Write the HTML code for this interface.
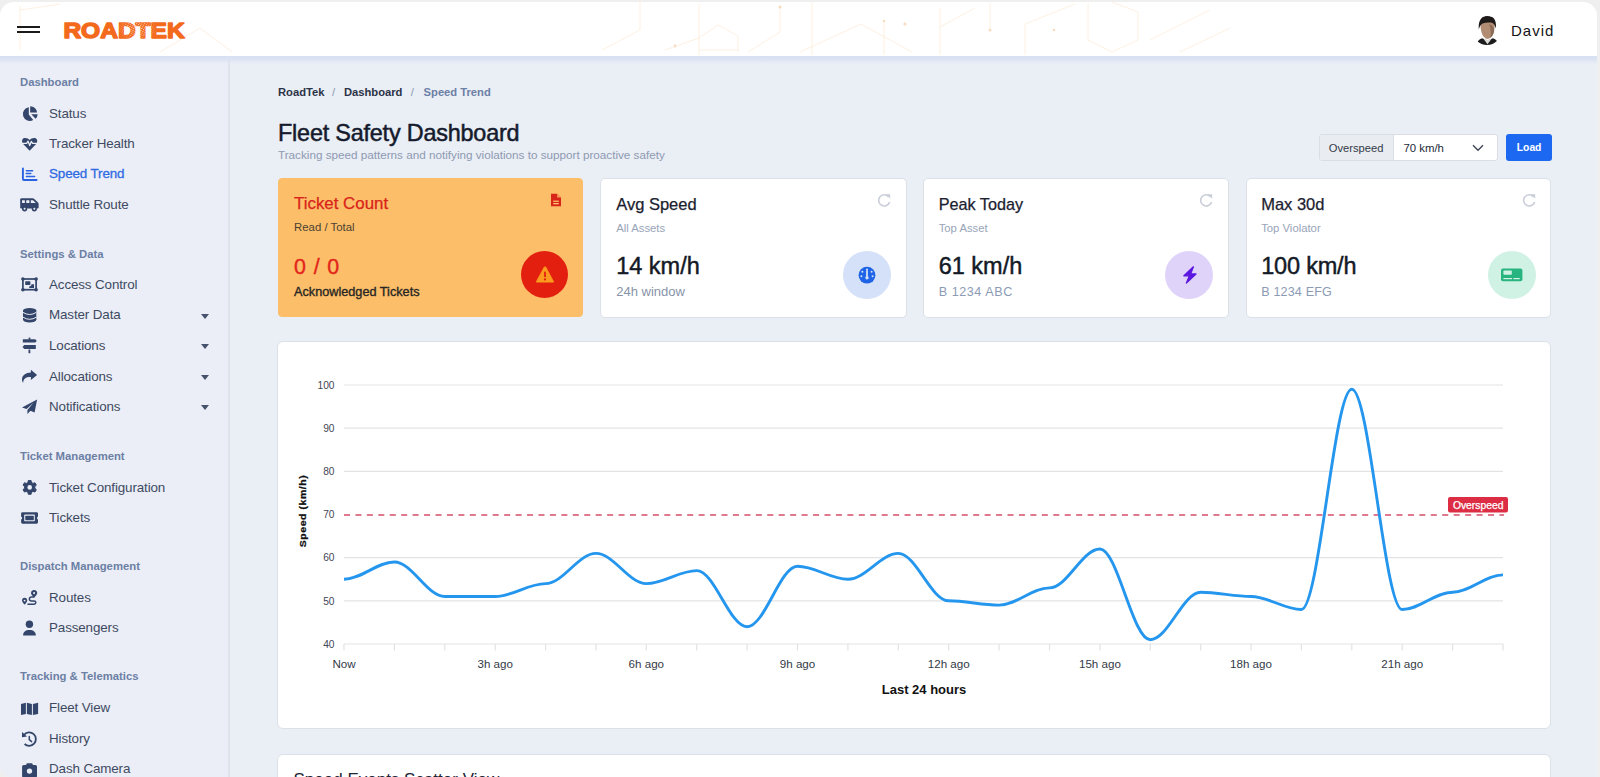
<!DOCTYPE html>
<html><head><meta charset="utf-8">
<style>
*{box-sizing:border-box;margin:0;padding:0}
html,body{width:1600px;height:777px;overflow:hidden;background:#efefef;font-family:"Liberation Sans",sans-serif;position:relative}
.abs{position:absolute;white-space:nowrap}
#bg{position:absolute;left:0;top:2px;width:1597px;height:775px;background:#eaeef5;border-radius:14px 14px 0 12px}
#side{position:absolute;left:0;top:55px;width:230px;height:722px;background:#ebeef6;border-right:2px solid #dde2eb;border-radius:0 0 0 12px}
#shadow{position:absolute;left:0;top:55px;width:1597px;height:9px;background:linear-gradient(#d5dff2,#dbe3f3 45%,rgba(234,238,246,0))}
#hdr{position:absolute;left:0;top:2px;width:1597px;height:53.5px;background:#fff;border-radius:14px 14px 0 0}
.sh{position:absolute;left:20px;font-size:11.3px;font-weight:bold;color:#6c7fa5;line-height:14px;white-space:nowrap}
.it{position:absolute;left:49px;font-size:13.4px;letter-spacing:-0.12px;color:#3e4a62;line-height:16px;white-space:nowrap}
.it.act{color:#2e6be3;-webkit-text-stroke:0.3px #2e6be3}
.car{position:absolute;left:201.2px;width:0;height:0;border-left:4.6px solid transparent;border-right:4.6px solid transparent;border-top:5.2px solid #46526b}
.card{position:absolute;top:177.8px;height:139.8px;background:#fff;border:1px solid #dce1e9;border-radius:5px}
.t{position:absolute;white-space:nowrap;line-height:1}
</style></head><body>
<div id="bg"></div>
<div id="side"></div>
<div id="shadow"></div>
<div id="hdr"></div>
<svg class="abs" style="left:0;top:2px" width="1597" height="53" viewBox="0 2 1597 53"><g fill="none" stroke="#fcecdb" stroke-width="0.8">
<path d="M699 4 V55 M665 50 L699 38 L718 25 L738 36 V52 M738 50 L699 50"/>
<path d="M780 5 V32 L748 52 M812 2 V55 M800 52 L861 24 L912 52"/>
<path d="M884 20 V55 M940 8 V55 M940 27 L975 8 M990 3 V30"/>
<path d="M1025 55 V24 L1075 4 M1088 4 V40 L1112 52 L1138 40 V12 L1112 2"/>
<path d="M1150 40 L1210 10 M1180 52 L1230 28 M602 50 L640 30 V2"/>
<path d="M20 6 V50 M20 10 L60 4 M160 52 L200 28 L232 52"/>
</g><g fill="#f7dcc0"><circle cx="780" cy="7" r="1.5"/><circle cx="990" cy="30" r="1.5"/><circle cx="905" cy="24" r="1.6"/><circle cx="675" cy="46" r="1.4"/><circle cx="884" cy="21" r="1.3"/><circle cx="1054" cy="30" r="1.3"/></g></svg>

<!-- header -->
<div class="abs" style="left:17px;top:25.8px;width:23px;height:2px;background:#1b1b1b"></div>
<div class="abs" style="left:17px;top:31px;width:23px;height:2.2px;background:#1b1b1b"></div>
<svg class="abs" style="left:0;top:0" width="230" height="55"><text x="63.4" y="38.2" font-size="22.6" font-weight="bold" fill="#f36a1c" stroke="#f36a1c" stroke-width="1.5" stroke-linejoin="round" textLength="121.3" lengthAdjust="spacingAndGlyphs">ROADTEK</text><defs><pattern id="spk" width="2.3" height="1.9" patternUnits="userSpaceOnUse" patternTransform="rotate(28)"><rect width="1.2" height="0.9" fill="#fff"/></pattern><radialGradient id="mg"><stop offset="0" stop-color="#fff" stop-opacity="0.9"/><stop offset="0.6" stop-color="#fff" stop-opacity="0.55"/><stop offset="1" stop-color="#fff" stop-opacity="0"/></radialGradient><mask id="mk"><ellipse cx="137" cy="29" rx="21" ry="13" fill="url(#mg)"/></mask></defs><rect x="92" y="16" width="66" height="28" fill="url(#spk)" mask="url(#mk)"/></svg>
<svg class="abs" style="left:1465px;top:10px" width="45" height="42" viewBox="1465 10 45 42">
 <defs><clipPath id="av"><circle cx="1487" cy="30.5" r="14.5"/></clipPath></defs>
 <g clip-path="url(#av)">
  <path d="M1476 46 Q1477 40 1482 38.2 L1487.5 40.5 L1493 38.2 Q1498 40 1499 46 Z" fill="#1c1c1e"/>
  <path d="M1483.2 38.4 L1487.5 44.2 L1491.8 38.4 L1487.5 40 Z" fill="#dcd9d6"/>
  <path d="M1480.4 21 Q1480 37.6 1487.6 39 Q1494.9 37.6 1494.9 21 Z" fill="#b38d73"/>
  <path d="M1489 24 Q1494.8 26 1494.2 31 Q1493.4 36 1490 38 Q1492 32 1489 24 Z" fill="#8d6c58"/>
  <path d="M1478.8 29.5 C1478 19 1482.6 15.8 1487.5 15.8 C1493 15.8 1497 19.5 1495.8 28.6 C1495 25 1494 23.2 1491 22.6 C1488 22.2 1485 22.6 1482.6 23.4 C1480.6 24.4 1479.6 26.6 1478.8 29.5 Z" fill="#1d1a19"/>
 </g>
</svg>
<div class="t" style="left:1511px;top:22.5px;font-size:15px;letter-spacing:1px;color:#141414">David</div>

<!-- sidebar -->
<div class="sh" style="top:74.9px">Dashboard</div>
<div class="sh" style="top:246.5px">Settings &amp; Data</div>
<div class="sh" style="top:449.1px">Ticket Management</div>
<div class="sh" style="top:559.1px">Dispatch Management</div>
<div class="sh" style="top:669.4px">Tracking &amp; Telematics</div>
<div class="it" style="top:105.86px">Status</div>
<div class="it" style="top:136.16px">Tracker Health</div>
<div class="it act" style="top:166.26px">Speed Trend</div>
<div class="it" style="top:197.06px">Shuttle Route</div>
<div class="it" style="top:277.16px">Access Control</div>
<div class="it" style="top:307.26px">Master Data</div>
<div class="car" style="top:313.5px"></div>
<div class="it" style="top:338.06px">Locations</div>
<div class="car" style="top:344.3px"></div>
<div class="it" style="top:368.66px">Allocations</div>
<div class="car" style="top:374.9px"></div>
<div class="it" style="top:398.76px">Notifications</div>
<div class="car" style="top:405.0px"></div>
<div class="it" style="top:480.16px">Ticket Configuration</div>
<div class="it" style="top:510.26px">Tickets</div>
<div class="it" style="top:589.96px">Routes</div>
<div class="it" style="top:620.36px">Passengers</div>
<div class="it" style="top:700.06px">Fleet View</div>
<div class="it" style="top:730.56px">History</div>
<div class="it" style="top:761.06px">Dash Camera</div>
<svg class="abs" style="left:0;top:0" width="229" height="777">
<g fill="#33456a"><path d="M28.8 107.2 V114.4 L33.2 120 A6.9 6.9 0 1 1 28.8 107.2 Z"/><path d="M30.2 106.2 A6.9 6.9 0 0 1 37.1 112.6 H30.2 Z"/><path d="M31.3 114.2 H37.7 A7 7 0 0 1 35.6 118.8 Z"/></g>
<g fill="#33456a"><path d="M29.65 150.7 L23.4 144.2 C21.4 142 21.6 138.6 24.4 138 C26.4 137.6 28.4 138.5 29.65 140 C30.9 138.5 32.9 137.6 34.9 138 C37.7 138.6 37.9 142 35.9 144.2 Z"/></g>
<polyline points="21.5,143.3 26.6,143.3 28.1,141.2 29.7,145.6 31.3,141.4 32.6,143.3 38,143.3" fill="none" stroke="#ebeef6" stroke-width="1.3" stroke-linejoin="round"/>
<g stroke="#2a62e2" fill="none" stroke-linecap="round"><path d="M22.9 168.4 V179 Q22.9 180 23.9 180 H36.6" stroke-width="1.9"/><path d="M26.4 170.7 H32.6 M26.2 173.4 H30.8 M26.4 176.4 H34.6" stroke-width="1.5"/></g>
<g fill="#33456a"><path d="M20.2 199.6 Q20.2 198.2 21.6 198.2 H32.6 Q33.6 198.2 34.3 198.9 L38 202.6 Q38.6 203.3 38.6 204.3 V207.3 Q38.6 208.5 37.4 208.5 H21.4 Q20.2 208.5 20.2 207.3 Z"/><circle cx="24.6" cy="208.8" r="2.6"/><circle cx="34.3" cy="208.8" r="2.6"/></g>
<g fill="#ebeef6"><rect x="22" y="200.2" width="2.9" height="2.8" rx=".4"/><rect x="26.2" y="200.2" width="3.2" height="2.8" rx=".4"/><path d="M30.8 200.2 H33 L35.9 203 H30.8 Z"/><circle cx="24.6" cy="208.8" r="1.0"/><circle cx="34.3" cy="208.8" r="1.0"/></g>
<g fill="#33456a"><rect x="22.9" y="279" width="13.2" height="10.7" fill="none" stroke="#33456a" stroke-width="1.7"/><circle cx="22.9" cy="279" r="1.8"/><circle cx="36.1" cy="279" r="1.8"/><circle cx="22.9" cy="289.7" r="1.8"/><circle cx="36.1" cy="289.7" r="1.8"/><rect x="25.2" y="281.2" width="5.2" height="3.7" rx=".6"/><path d="M31.6 284.2 H34 V287.9 H29.2 V286.4 Q31.6 286.2 31.6 284.2 Z"/></g>
<g fill="#33456a"><ellipse cx="29.65" cy="310.6" rx="6.65" ry="2.6"/><rect x="23" y="310.6" width="13.3" height="9.3"/><ellipse cx="29.65" cy="319.8" rx="6.65" ry="2.6"/></g><path d="M23 312.4 Q29.65 316.6 36.3 312.4 M23 317.2 Q29.65 321.4 36.3 317.2" fill="none" stroke="#ebeef6" stroke-width="1"/>
<g fill="#33456a"><rect x="28.6" y="337.6" width="1.8" height="2" /><path d="M22.8 339.2 H35.2 L36.8 340.9 L35.2 342.6 H22.8 Z"/><path d="M24.2 344.9 H35.8 V348.9 H24.2 L22.5 346.9 Z"/><rect x="28.5" y="349.6" width="1.8" height="3.6" rx=".5"/></g>
<path d="M37.1 375 L30.9 369.7 V372.6 C25.8 372.8 22 375.2 22 379.6 C22 381 22.6 382.2 23.2 382.8 C23.2 378.8 26 376.8 30.9 377 V380 Z" fill="#33456a"/>
<path d="M37.1 399.4 L22 407.4 L26.6 409 L33.6 402.6 L27.4 410 V414.1 L30.4 410.8 L34.6 412.6 Z" fill="#33456a"/>
<path d="M27.87 482.53 L28.31 480.54 L31.09 480.54 L31.53 482.53 L33.00 483.38 L34.95 482.77 L36.34 485.17 L34.83 486.55 L34.83 488.25 L36.34 489.63 L34.95 492.03 L33.00 491.42 L31.53 492.27 L31.09 494.26 L28.31 494.26 L27.87 492.27 L26.40 491.42 L24.45 492.03 L23.06 489.63 L24.57 488.25 L24.57 486.55 L23.06 485.17 L24.45 482.77 L26.40 483.38 Z" fill="#33456a" stroke="#33456a" stroke-width="1" stroke-linejoin="round"/><circle cx="29.7" cy="487.4" r="2.3" fill="#ebeef6"/>
<path d="M21.1 513.6 Q21.1 512.2 22.5 512.2 H36.6 Q38 512.2 38 513.6 V516.4 Q37 517 37 518 Q37 519 38 519.6 V522.3 Q38 523.7 36.6 523.7 H22.5 Q21.1 523.7 21.1 522.3 V519.6 Q22.1 519 22.1 518 Q22.1 517 21.1 516.4 Z" fill="#33456a"/><rect x="24.2" y="514.6" width="10.6" height="6.7" rx=".8" fill="#ebeef6"/><rect x="25.3" y="515.8" width="8.5" height="4.4" rx=".4" fill="#33456a"/>
<g fill="#33456a"><path d="M34.1 590 C32.2 590 31 591.4 31 593 C31 594.8 34.1 597.6 34.1 597.6 C34.1 597.6 37.2 594.8 37.2 593 C37.2 591.4 36 590 34.1 590 Z"/><path d="M24.6 597.8 C22.9 597.8 22 599.1 22 600.5 C22 602.1 24.6 604.6 24.6 604.6 C24.6 604.6 27.2 602.1 27.2 600.5 C27.2 599.1 26.3 597.8 24.6 597.8 Z"/></g><circle cx="34.1" cy="593.1" r="1.05" fill="#ebeef6"/><circle cx="24.6" cy="600.6" r="0.95" fill="#ebeef6"/><path d="M33.8 597 H31.6 Q29.4 597 29.4 599 Q29.4 601 31.6 601 H34 Q35.8 601 35.8 602.6 Q35.8 604.2 34 604.2 H28" fill="none" stroke="#33456a" stroke-width="1.5" stroke-linecap="round"/>
<g fill="#33456a"><circle cx="29.4" cy="624.2" r="3.7"/><path d="M23.1 635.4 C23.1 632 25.4 630 29.45 630 C33.5 630 35.8 632 35.8 635.4 Z"/></g>
<g fill="#33456a"><path d="M21 704 L25.9 702.7 V714 L21 715.1 Z"/><path d="M26.9 702.7 L31.9 704 V715.1 L26.9 714 Z"/><path d="M32.9 704 L38.1 702.7 V714 L32.9 715.1 Z"/></g>
<path d="M24.2 734.6 A6.7 6.7 0 1 1 24.6 744" fill="none" stroke="#33456a" stroke-width="1.8"/><path d="M22 732 L27 736.6 L22 737.2 Z" fill="#33456a"/><path d="M29.3 736.4 V739.6 L31.6 741.6" fill="none" stroke="#33456a" stroke-width="1.5" stroke-linecap="round"/>
<path d="M22.1 766.6 Q22.1 765 23.7 765 H26 L26.9 763.2 H32.1 L33 765 H35.4 Q37 765 37 766.6 V776 Q37 777.6 35.4 777.6 H23.7 Q22.1 777.6 22.1 776 Z" fill="#33456a"/><circle cx="29.5" cy="771.1" r="2.7" fill="#ebeef6"/>
</svg>

<!-- breadcrumb/title -->
<div class="t" style="left:278px;top:87px;font-size:11.2px;font-weight:bold;color:#2b3346">RoadTek</div>
<div class="t" style="left:332px;top:87px;font-size:11.2px;color:#8c99b0">/</div>
<div class="t" style="left:344px;top:87px;font-size:11.2px;font-weight:bold;color:#2b3346">Dashboard</div>
<div class="t" style="left:410.8px;top:87px;font-size:11.2px;color:#8c99b0">/</div>
<div class="t" style="left:423.6px;top:87px;font-size:11.2px;font-weight:bold;color:#6c7fa5">Speed Trend</div>
<div class="t" style="left:278px;top:122.2px;font-size:23.4px;letter-spacing:-0.2px;color:#151b2d;-webkit-text-stroke:0.5px #151b2d">Fleet Safety Dashboard</div>
<div class="t" style="left:278px;top:148.8px;font-size:11.7px;color:#8e9ab2">Tracking speed patterns and notifying violations to support proactive safety</div>

<!-- overspeed control -->
<div class="abs" style="left:1318.5px;top:134px;width:179px;height:27px;border:1px solid #d8dde6;border-radius:3px;background:#fff;overflow:hidden">
 <div class="abs" style="left:0;top:0;width:74px;height:25px;background:#e9ecf1;border-right:1px solid #d8dde6"></div>
</div>
<div class="t" style="left:1328.7px;top:142.6px;font-size:11.2px;color:#333a48">Overspeed</div>
<div class="t" style="left:1403.4px;top:142.6px;font-size:11.4px;color:#222a38">70 km/h</div>
<svg class="abs" style="left:1470px;top:142px" width="16" height="12"><path d="M3 3.3 L8 8.3 L13 3.3" fill="none" stroke="#3a4152" stroke-width="1.3"/></svg>
<div class="abs" style="left:1506px;top:134px;width:45.5px;height:27.3px;background:#1c68f1;border-radius:3px"></div>
<div class="t" style="left:1516.8px;top:142.8px;font-size:10.3px;font-weight:bold;color:#fff">Load</div>

<!-- cards -->
<div class="card" style="left:278.1px;top:178.1px;height:138.5px;width:305.3px;background:#fdbe69;border-color:#fdbe69;border-radius:4px"></div>
<div class="card" style="left:599.5px;width:307.1px"></div>
<div class="card" style="left:922.8px;width:306.2px"></div>
<div class="card" style="left:1245.8px;width:305.2px"></div>
<!-- card1 -->
<div class="t" style="left:294px;top:196.4px;font-size:16.9px;color:#d8231a;-webkit-text-stroke:0.25px #d8231a">Ticket Count</div>
<div class="t" style="left:294px;top:222.3px;font-size:11.4px;color:#4a3f32">Read / Total</div>
<div class="t" style="left:294px;top:257.2px;font-size:21.4px;letter-spacing:0.9px;color:#e2261b;-webkit-text-stroke:0.4px #e2261b">0 / 0</div>
<div class="t" style="left:294px;top:285.6px;font-size:12.7px;color:#272624;-webkit-text-stroke:0.35px #272624">Acknowledged Tickets</div>
<svg class="abs" style="left:549px;top:192px" width="14" height="16"><path d="M2 1.8 H8.2 L12 5.6 V14.2 H2 Z" fill="#d9241a"/><path d="M8.2 1.8 V5.6 H12" fill="#f7a05a"/><rect x="4.2" y="8.6" width="5.6" height="1.3" fill="#fdbf6a"/><rect x="4.2" y="11" width="5.6" height="1.3" fill="#fdbf6a"/></svg>
<div class="abs" style="left:520.7px;top:250.8px;width:47.4px;height:47.4px;border-radius:50%;background:#e3200f"></div>
<svg class="abs" style="left:533px;top:264px" width="24" height="22"><path d="M12 2.6 Q12.9 2.6 13.4 3.5 L20.8 17.2 Q21.3 18.4 20 18.4 H4 Q2.7 18.4 3.2 17.2 L10.6 3.5 Q11.1 2.6 12 2.6 Z" fill="#fb9a1e"/><rect x="11.1" y="7.6" width="1.8" height="5.6" rx=".8" fill="#e3200f"/><circle cx="12" cy="15.4" r="1.1" fill="#e3200f"/></svg>

<!-- card2 -->
<div class="t" style="left:616.2px;top:196.2px;font-size:16.5px;color:#1b2130;-webkit-text-stroke:0.25px #1b2130">Avg Speed</div>
<div class="t" style="left:616.2px;top:222.8px;font-size:11.3px;color:#98a4b8">All Assets</div>
<div class="t" style="left:616.2px;top:255px;font-size:23.5px;color:#141a26;-webkit-text-stroke:0.45px #141a26">14 km/h</div>
<div class="t" style="left:616.2px;top:285.4px;font-size:13px;color:#8793aa">24h window</div>
<svg class="abs" style="left:876px;top:192px" width="17" height="16"><path d="M12.4 4.6 A5.6 5.6 0 1 0 13.6 10" fill="none" stroke="#c9ced8" stroke-width="1.6"/><path d="M9.6 2.2 H14.2 V6.8 Z" fill="#c9ced8"/></svg>
<div class="abs" style="left:842.7px;top:250.6px;width:48.2px;height:48.2px;border-radius:50%;background:#d4e1f8"></div>
<svg class="abs" style="left:857px;top:265px" width="20" height="20"><circle cx="10" cy="10.2" r="8.4" fill="#1f63e6"/><rect x="9.1" y="5" width="1.8" height="6.8" rx=".9" fill="#d4e1f8"/><circle cx="10" cy="12.8" r="1.7" fill="#d4e1f8"/><circle cx="10" cy="4.4" r="1" fill="#d4e1f8"/><circle cx="5.4" cy="6.8" r="1" fill="#d4e1f8"/><circle cx="14.6" cy="6.8" r="1" fill="#d4e1f8"/><circle cx="4.4" cy="11.2" r="1" fill="#d4e1f8"/><circle cx="15.6" cy="11.2" r="1" fill="#d4e1f8"/></svg>

<!-- card3 -->
<div class="t" style="left:938.7px;top:196.2px;font-size:16.2px;color:#1b2130;-webkit-text-stroke:0.25px #1b2130">Peak Today</div>
<div class="t" style="left:938.7px;top:222.8px;font-size:11.3px;color:#98a4b8">Top Asset</div>
<div class="t" style="left:938.7px;top:255px;font-size:23.5px;color:#141a26;-webkit-text-stroke:0.45px #141a26">61 km/h</div>
<div class="t" style="left:938.7px;top:285.6px;font-size:12.6px;letter-spacing:0.55px;color:#8c9bb5">B 1234 ABC</div>
<svg class="abs" style="left:1198px;top:192px" width="17" height="16"><path d="M12.4 4.6 A5.6 5.6 0 1 0 13.6 10" fill="none" stroke="#c9ced8" stroke-width="1.6"/><path d="M9.6 2.2 H14.2 V6.8 Z" fill="#c9ced8"/></svg>
<div class="abs" style="left:1165.2px;top:250.6px;width:48px;height:48px;border-radius:50%;background:#dfd3fa"></div>
<svg class="abs" style="left:1180px;top:265px" width="20" height="20"><path d="M13.4 1.8 L3.9 10.8 H9.4 L6.4 18 L16 9 H10.6 Z" fill="#5c17e0" stroke="#5c17e0" stroke-width="1.3" stroke-linejoin="round"/></svg>

<!-- card4 -->
<div class="t" style="left:1261.2px;top:196.2px;font-size:16.5px;color:#1b2130;-webkit-text-stroke:0.25px #1b2130">Max 30d</div>
<div class="t" style="left:1261.2px;top:222.8px;font-size:11.3px;color:#98a4b8">Top Violator</div>
<div class="t" style="left:1261.2px;top:255px;font-size:23.5px;letter-spacing:-0.2px;color:#141a26;-webkit-text-stroke:0.45px #141a26">100 km/h</div>
<div class="t" style="left:1261.2px;top:285.6px;font-size:12.6px;letter-spacing:0.15px;color:#8c9bb5">B 1234 EFG</div>
<svg class="abs" style="left:1521px;top:192px" width="17" height="16"><path d="M12.4 4.6 A5.6 5.6 0 1 0 13.6 10" fill="none" stroke="#c9ced8" stroke-width="1.6"/><path d="M9.6 2.2 H14.2 V6.8 Z" fill="#c9ced8"/></svg>
<div class="abs" style="left:1487.8px;top:250.6px;width:48px;height:48px;border-radius:50%;background:#d0f2e5"></div>
<svg class="abs" style="left:1500px;top:265px" width="24" height="20"><rect x="1" y="3.6" width="21.4" height="12.6" rx="2" fill="#27b47e"/><rect x="3.4" y="5.6" width="8.4" height="4.2" rx=".8" fill="#d0f2e5"/><rect x="3.4" y="13" width="8.6" height="1.2" fill="#d0f2e5"/><rect x="13.4" y="13" width="6.4" height="1.2" fill="#d0f2e5"/></svg>


<!-- chart card -->
<div class="card" style="left:277px;top:340.8px;width:1274px;height:388px;border-radius:6px"></div>
<div class="card" style="left:277px;top:753.5px;width:1274px;height:60px;border-radius:6px"></div>
<div class="t" style="left:293.5px;top:770.5px;font-size:17px;color:#1e2533">Speed Events Scatter View</div>
<!--CHART-->
<svg class="abs" style="left:0;top:0" width="1600" height="777" viewBox="0 0 1600 777" font-family="Liberation Sans, sans-serif">
<line x1="344.0" y1="385.0" x2="1503.0" y2="385.0" stroke="#e3e3e3" stroke-width="1.2"/>
<text x="334.5" y="388.7" font-size="10.2" fill="#3f4656" text-anchor="end">100</text>
<line x1="344.0" y1="428.2" x2="1503.0" y2="428.2" stroke="#e3e3e3" stroke-width="1.2"/>
<text x="334.5" y="431.9" font-size="10.2" fill="#3f4656" text-anchor="end">90</text>
<line x1="344.0" y1="471.3" x2="1503.0" y2="471.3" stroke="#e3e3e3" stroke-width="1.2"/>
<text x="334.5" y="475.0" font-size="10.2" fill="#3f4656" text-anchor="end">80</text>
<text x="334.5" y="518.2" font-size="10.2" fill="#3f4656" text-anchor="end">70</text>
<line x1="344.0" y1="557.7" x2="1503.0" y2="557.7" stroke="#e3e3e3" stroke-width="1.2"/>
<text x="334.5" y="561.4" font-size="10.2" fill="#3f4656" text-anchor="end">60</text>
<line x1="344.0" y1="600.8" x2="1503.0" y2="600.8" stroke="#e3e3e3" stroke-width="1.2"/>
<text x="334.5" y="604.5" font-size="10.2" fill="#3f4656" text-anchor="end">50</text>
<line x1="344.0" y1="644.0" x2="1503.0" y2="644.0" stroke="#e3e3e3" stroke-width="1.2"/>
<text x="334.5" y="647.7" font-size="10.2" fill="#3f4656" text-anchor="end">40</text>
<line x1="344.0" y1="644" x2="344.0" y2="650.5" stroke="#e3e3e3" stroke-width="1.2"/>
<line x1="394.4" y1="644" x2="394.4" y2="650.5" stroke="#e3e3e3" stroke-width="1.2"/>
<line x1="444.8" y1="644" x2="444.8" y2="650.5" stroke="#e3e3e3" stroke-width="1.2"/>
<line x1="495.2" y1="644" x2="495.2" y2="650.5" stroke="#e3e3e3" stroke-width="1.2"/>
<line x1="545.6" y1="644" x2="545.6" y2="650.5" stroke="#e3e3e3" stroke-width="1.2"/>
<line x1="596.0" y1="644" x2="596.0" y2="650.5" stroke="#e3e3e3" stroke-width="1.2"/>
<line x1="646.3" y1="644" x2="646.3" y2="650.5" stroke="#e3e3e3" stroke-width="1.2"/>
<line x1="696.7" y1="644" x2="696.7" y2="650.5" stroke="#e3e3e3" stroke-width="1.2"/>
<line x1="747.1" y1="644" x2="747.1" y2="650.5" stroke="#e3e3e3" stroke-width="1.2"/>
<line x1="797.5" y1="644" x2="797.5" y2="650.5" stroke="#e3e3e3" stroke-width="1.2"/>
<line x1="847.9" y1="644" x2="847.9" y2="650.5" stroke="#e3e3e3" stroke-width="1.2"/>
<line x1="898.3" y1="644" x2="898.3" y2="650.5" stroke="#e3e3e3" stroke-width="1.2"/>
<line x1="948.7" y1="644" x2="948.7" y2="650.5" stroke="#e3e3e3" stroke-width="1.2"/>
<line x1="999.1" y1="644" x2="999.1" y2="650.5" stroke="#e3e3e3" stroke-width="1.2"/>
<line x1="1049.5" y1="644" x2="1049.5" y2="650.5" stroke="#e3e3e3" stroke-width="1.2"/>
<line x1="1099.9" y1="644" x2="1099.9" y2="650.5" stroke="#e3e3e3" stroke-width="1.2"/>
<line x1="1150.3" y1="644" x2="1150.3" y2="650.5" stroke="#e3e3e3" stroke-width="1.2"/>
<line x1="1200.7" y1="644" x2="1200.7" y2="650.5" stroke="#e3e3e3" stroke-width="1.2"/>
<line x1="1251.0" y1="644" x2="1251.0" y2="650.5" stroke="#e3e3e3" stroke-width="1.2"/>
<line x1="1301.4" y1="644" x2="1301.4" y2="650.5" stroke="#e3e3e3" stroke-width="1.2"/>
<line x1="1351.8" y1="644" x2="1351.8" y2="650.5" stroke="#e3e3e3" stroke-width="1.2"/>
<line x1="1402.2" y1="644" x2="1402.2" y2="650.5" stroke="#e3e3e3" stroke-width="1.2"/>
<line x1="1452.6" y1="644" x2="1452.6" y2="650.5" stroke="#e3e3e3" stroke-width="1.2"/>
<line x1="1503.0" y1="644" x2="1503.0" y2="650.5" stroke="#e3e3e3" stroke-width="1.2"/>
<text x="344.0" y="668" font-size="11.6" fill="#333a48" text-anchor="middle">Now</text>
<text x="495.2" y="668" font-size="11.6" fill="#333a48" text-anchor="middle">3h ago</text>
<text x="646.3" y="668" font-size="11.6" fill="#333a48" text-anchor="middle">6h ago</text>
<text x="797.5" y="668" font-size="11.6" fill="#333a48" text-anchor="middle">9h ago</text>
<text x="948.7" y="668" font-size="11.6" fill="#333a48" text-anchor="middle">12h ago</text>
<text x="1099.9" y="668" font-size="11.6" fill="#333a48" text-anchor="middle">15h ago</text>
<text x="1251.0" y="668" font-size="11.6" fill="#333a48" text-anchor="middle">18h ago</text>
<text x="1402.2" y="668" font-size="11.6" fill="#333a48" text-anchor="middle">21h ago</text>
<line x1="344.0" y1="515" x2="1504" y2="515" stroke="#df7a8e" stroke-width="1.8" stroke-dasharray="6 5.44"/>
<rect x="1448" y="497" width="60" height="15.5" rx="2" fill="#dc2d45"/>
<text x="1478.2" y="508.7" font-size="10.35" fill="#fff" stroke="#fff" stroke-width="0.25" text-anchor="middle">Overspeed</text>
<path d="M344.0 579.2 C361.6 579.2 376.8 562.0 394.4 562.0 C412.0 562.0 427.1 596.5 444.8 596.5 C462.4 596.5 477.5 596.5 495.2 596.5 C512.8 596.5 527.9 583.6 545.6 583.6 C563.2 583.6 578.3 553.4 596.0 553.4 C613.6 553.4 628.7 583.6 646.3 583.6 C664.0 583.6 679.1 570.6 696.7 570.6 C714.4 570.6 729.5 626.7 747.1 626.7 C764.8 626.7 779.9 566.3 797.5 566.3 C815.2 566.3 830.3 579.2 847.9 579.2 C865.6 579.2 880.7 553.4 898.3 553.4 C915.9 553.4 931.1 600.8 948.7 600.8 C966.3 600.8 981.4 605.1 999.1 605.1 C1016.7 605.1 1031.8 587.9 1049.5 587.9 C1067.1 587.9 1082.2 549.0 1099.9 549.0 C1117.5 549.0 1132.6 639.7 1150.3 639.7 C1167.9 639.7 1183.0 592.2 1200.7 592.2 C1218.3 592.2 1233.4 596.5 1251.0 596.5 C1268.7 596.5 1283.8 609.5 1301.4 609.5 C1319.1 609.5 1334.2 389.3 1351.8 389.3 C1369.5 389.3 1384.6 609.5 1402.2 609.5 C1419.9 609.5 1435.0 592.2 1452.6 592.2 C1470.2 592.2 1485.4 574.9 1503.0 574.9" fill="none" stroke="#2596ee" stroke-width="2.9"/>
<text transform="translate(305.7 511) rotate(-90) scale(1 0.85)" font-size="10.5" letter-spacing="0.55" font-weight="bold" fill="#111" stroke="#111" stroke-width="0.3" text-anchor="middle">Speed (km/h)</text>
<text x="924" y="693.8" font-size="13" font-weight="bold" fill="#111" text-anchor="middle">Last 24 hours</text>
</svg>
<!--/CHART-->
</body></html>
